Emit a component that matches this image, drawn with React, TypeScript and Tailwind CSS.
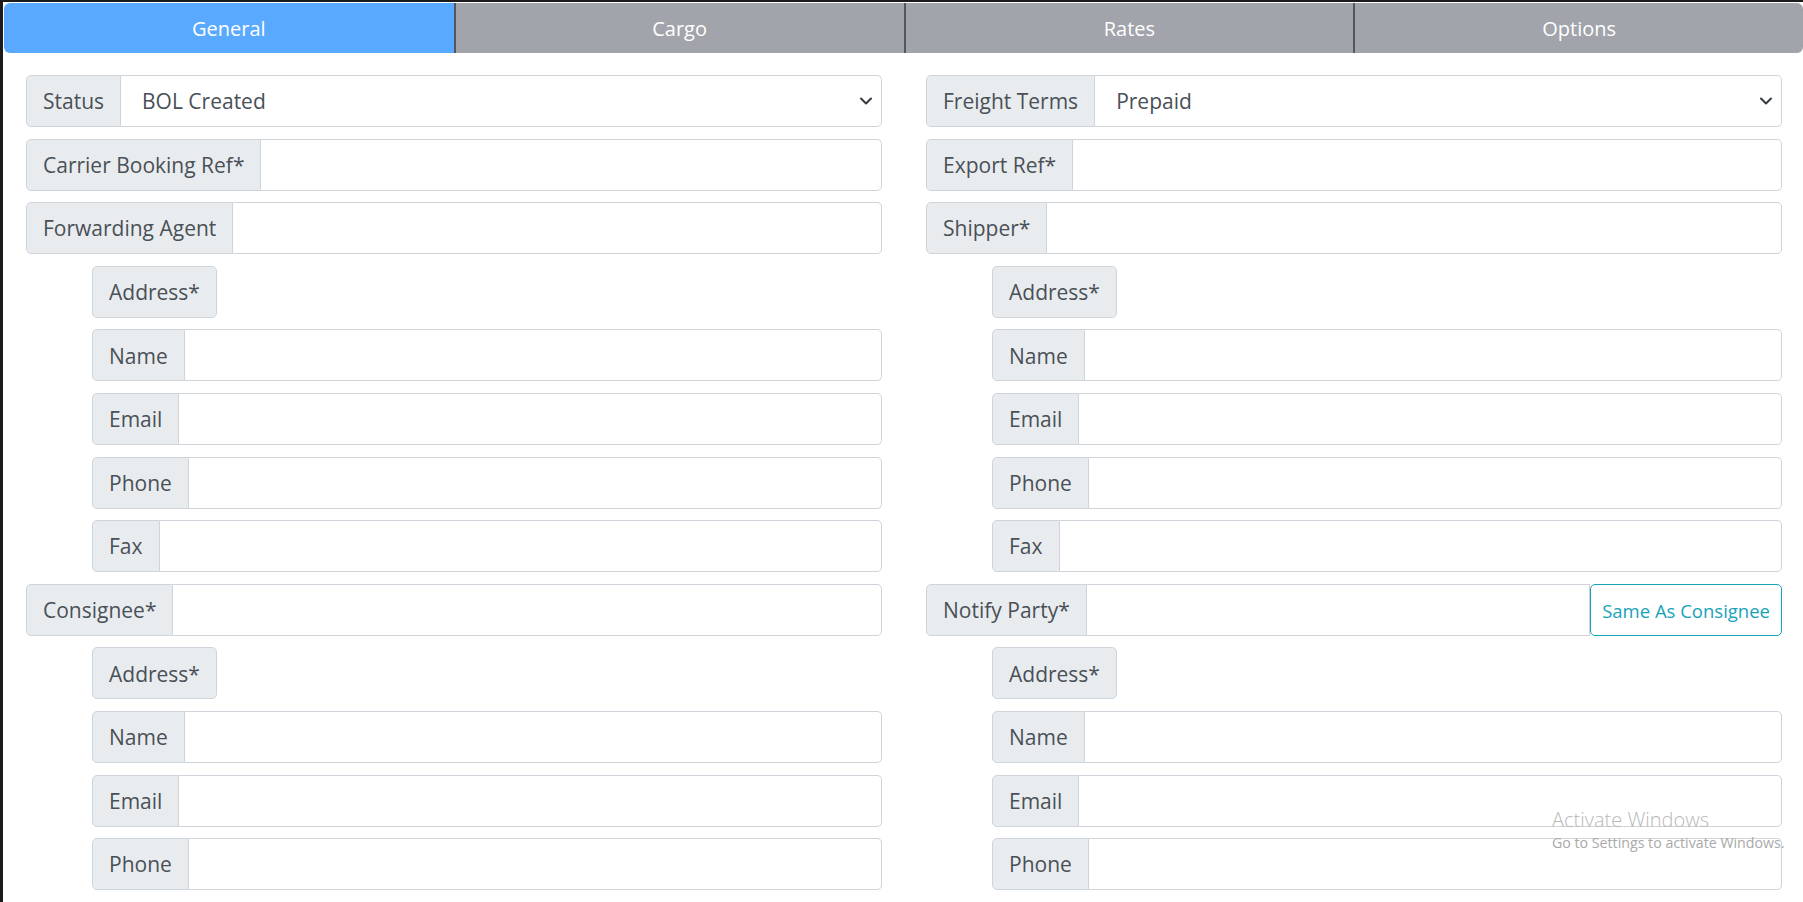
import { useState } from "react";

type Row =
  | { kind: "input"; label: string; indent?: boolean; action?: string }
  | { kind: "select"; label: string; value: string }
  | { kind: "label"; label: string; indent?: boolean };

const leftRows: Row[] = [
  { kind: "select", label: "Status", value: "BOL Created" },
  { kind: "input", label: "Carrier Booking Ref*" },
  { kind: "input", label: "Forwarding Agent" },
  { kind: "label", label: "Address*", indent: true },
  { kind: "input", label: "Name", indent: true },
  { kind: "input", label: "Email", indent: true },
  { kind: "input", label: "Phone", indent: true },
  { kind: "input", label: "Fax", indent: true },
  { kind: "input", label: "Consignee*" },
  { kind: "label", label: "Address*", indent: true },
  { kind: "input", label: "Name", indent: true },
  { kind: "input", label: "Email", indent: true },
  { kind: "input", label: "Phone", indent: true },
];

const rightRows: Row[] = [
  { kind: "select", label: "Freight Terms", value: "Prepaid" },
  { kind: "input", label: "Export Ref*" },
  { kind: "input", label: "Shipper*" },
  { kind: "label", label: "Address*", indent: true },
  { kind: "input", label: "Name", indent: true },
  { kind: "input", label: "Email", indent: true },
  { kind: "input", label: "Phone", indent: true },
  { kind: "input", label: "Fax", indent: true },
  { kind: "input", label: "Notify Party*", action: "Same As Consignee" },
  { kind: "label", label: "Address*", indent: true },
  { kind: "input", label: "Name", indent: true },
  { kind: "input", label: "Email", indent: true },
  { kind: "input", label: "Phone", indent: true },
];

const tabs = ["General", "Cargo", "Rates", "Options"];

function Chevron() {
  return (
    <svg width="14" height="10" viewBox="0 0 14 10" aria-hidden="true">
      <path d="M2 2.5 L7 7.5 L12 2.5" fill="none" stroke="#343a40" strokeWidth="2" strokeLinecap="round" strokeLinejoin="round" />
    </svg>
  );
}

function FieldRow({ row }: { row: Row }) {
  const indent = "indent" in row && row.indent ? "ml-[66px]" : "";

  if (row.kind === "label") {
    return (
      <div className={`flex h-[52px] ${indent}`}>
        <span className="flex items-center rounded-[5px] border border-[#ced4da] bg-[#e9ecef] px-[16px] pt-[2px] text-[#495057]">
          {row.label}
        </span>
      </div>
    );
  }

  return (
    <div className={`flex h-[52px] ${indent}`}>
      <span className="flex shrink-0 items-center rounded-l-[5px] border border-[#ced4da] bg-[#e9ecef] px-[16px] pt-[2px] text-[#495057]">
        {row.label}
      </span>
      {row.kind === "select" ? (
        <div className="flex min-w-0 flex-1 items-center justify-between rounded-r-[5px] border border-l-0 border-[#ced4da] bg-white pl-[21px] pr-[8px] text-[#495057]">
          <span className="pt-[2px]">{row.value}</span>
          <Chevron />
        </div>
      ) : (
        <>
          <input
            className={`min-w-0 flex-1 border border-l-0 border-[#ced4da] bg-white px-[16px] text-[#495057] outline-none ${
              row.action ? "" : "rounded-r-[5px]"
            }`}
          />
          {row.action && (
            <button
              type="button"
              className="shrink-0 rounded-[5px] border border-[#17a2b8] bg-white px-[11px] pt-[2px] text-[18.5px] text-[#17a2b8]"
            >
              {row.action}
            </button>
          )}
        </>
      )}
    </div>
  );
}

export default function App() {
  const [active, setActive] = useState(0);

  return (
    <div className="relative h-[902px] overflow-hidden border-l-[3px] border-t-[2px] border-[#1b1b1b] bg-white font-['Open_Sans',sans-serif] text-[21px]">
      <div className="ml-px mt-px grid h-[50px] grid-cols-4 overflow-hidden rounded-[6px]">
        {tabs.map((tab, index) => (
          <button
            key={tab}
            type="button"
            onClick={() => setActive(index)}
            className={`flex items-center justify-center pt-[1px] text-[20px] text-white ${
              index > 0 ? "border-l-2 border-[#54585e]" : ""
            } ${index === active ? "bg-[#59a9ff]" : "bg-[#a1a4aa]"}`}
          >
            {tab}
          </button>
        ))}
      </div>

      <div className="grid grid-cols-2 gap-[44px] pl-[23px] pr-[21px] pt-[22px]">
        {[leftRows, rightRows].map((rows, col) => (
          <div key={col} className="flex flex-col gap-[11.6px]">
            {rows.map((row, i) => (
              <FieldRow key={i} row={row} />
            ))}
          </div>
        ))}
      </div>

      {/* windows watermark */}
      <div className="pointer-events-none absolute left-[1549px] top-[805px] font-['Open_Sans',sans-serif] leading-tight">
        <p className="text-[20px] font-light text-[#b9b9b9]">Activate Windows</p>
        <p className="mt-[2px] text-[14.2px] text-[#a9a9a9]">Go to Settings to activate Windows.</p>
      </div>
    </div>
  );
}
